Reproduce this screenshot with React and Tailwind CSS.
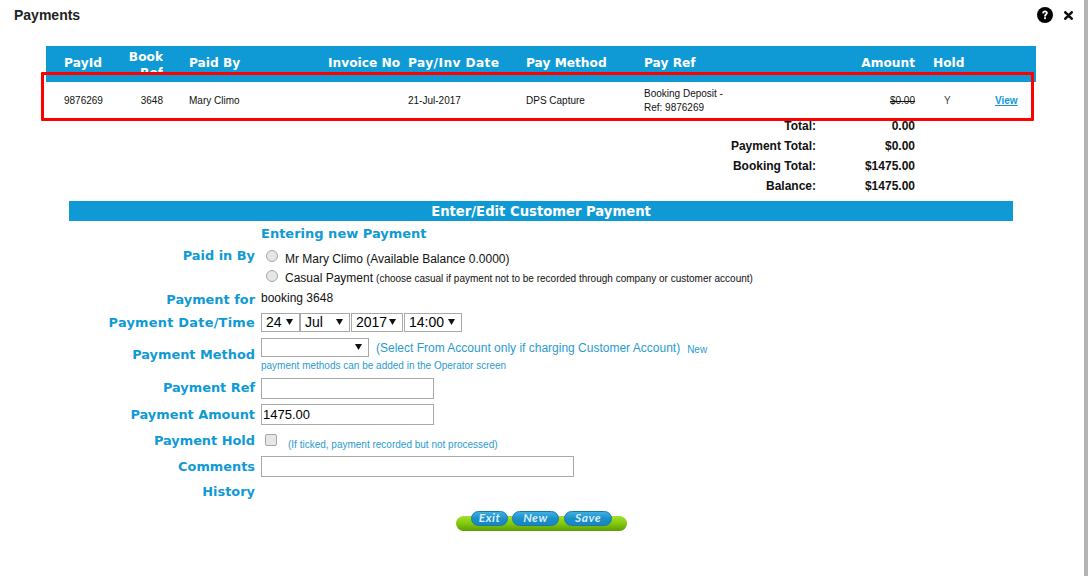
import React from "react";

const V = "font-['DejaVu_Sans',Verdana,sans-serif]";
const A = "font-['Liberation_Sans',Arial,sans-serif]";
const blue = "text-[#0f9ad6]";

function Label({ children, className = "" }) {
  return (
    <div className={`w-[187px] shrink-0 pr-[6px] text-right text-[12.9px] leading-[16px] font-bold ${blue} ${V} ${className}`}>
      {children}
    </div>
  );
}

function Sel({ w, v }) {
  return (
    <div className={`relative h-[19px] border border-[#a9a9a9] bg-white text-[14px] leading-[17px] text-black pl-[4px] ${w}`}>
      {v}
      <svg className="absolute right-[6px] top-[5px]" width="7" height="6" viewBox="0 0 7 6">
        <path d="M0 0H7L3.5 6Z" fill="#111" />
      </svg>
    </div>
  );
}

function Btn({ children, w }) {
  return (
    <div className={`flex h-[15px] items-center justify-center rounded-full border border-[#1479ad] bg-gradient-to-b from-[#3fb0e4] via-[#1c8fca] to-[#1a86c0] pb-[1px] font-['Lato',sans-serif] text-[12px] italic font-bold tracking-[0.5px] text-[#d7effa] ${w}`}>
      {children}
    </div>
  );
}

export default function App() {
  const th = `text-[12.2px] leading-[16px] font-bold text-white ${V}`;
  const td = "pt-[1px] text-[10px] leading-[14px] text-[#111]";
  const totals = [
    ["Total:", "0.00"],
    ["Payment Total:", "$0.00"],
    ["Booking Total:", "$1475.00"],
    ["Balance:", "$1475.00"],
  ];
  return (
    <div className={`relative h-[576px] w-[1088px] overflow-hidden bg-white ${A}`}>
      <div className="absolute right-0 top-0 h-full w-[4px] bg-[#b4b4b4]" />
      <div className="flex h-[46px] items-start justify-between pl-[14px] pr-[15px] pt-[7px]">
        <div className="text-[14px] leading-[17px] font-bold text-[#222]">Payments</div>
        <div className="flex items-center gap-[11px]">
          <svg width="16" height="16" viewBox="0 0 16 16">
            <circle cx="8" cy="8" r="8" fill="#000" />
            <path d="M5.2 6.2C5.2 4.6 6.4 3.6 8 3.6S10.8 4.6 10.8 6C10.8 7.8 8.9 7.8 8.9 9.4H7.1C7.1 7.2 8.9 7.2 8.9 6.1C8.9 5.6 8.5 5.3 8 5.3S7 5.7 7 6.4Z" fill="#fff" />
            <rect x="7.1" y="10.2" width="1.8" height="1.9" fill="#fff" />
          </svg>
          <svg width="9" height="9" viewBox="0 0 9 9">
            <path d="M1.3 1.3L7.7 7.7M7.7 1.3L1.3 7.7" stroke="#111" strokeWidth="2.6" strokeLinecap="round" />
          </svg>
        </div>
      </div>

      <div className="ml-[46px] w-[990px]">
        <div className="grid h-[36px] grid-cols-[49px_50px_165px_80px_118px_118px_219px_52px_1fr] bg-[#0f9ad6] pl-[18px]">
          <div className={`${th} pt-[9px] tracking-[0.1px]`}>PayId</div>
          <div className={`${th} h-[29px] overflow-hidden pt-[3px] text-right leading-[14px]`}>Book Ref</div>
          <div className={`${th} pl-[26px] pt-[9px] whitespace-nowrap`}>Paid By</div>
          <div className={`${th} pt-[9px] whitespace-nowrap`}>Invoice No</div>
          <div className={`${th} pt-[9px] whitespace-nowrap tracking-[0.4px]`}>Pay/Inv Date</div>
          <div className={`${th} pt-[9px] whitespace-nowrap`}>Pay Method</div>
          <div className={`${th} pt-[9px] whitespace-nowrap`}>Pay Ref</div>
          <div className={`${th} -ml-[48px] pt-[9px] text-right`}>Amount</div>
          <div className={`${th} pl-[18px] pt-[9px]`}>Hold</div>
        </div>
        <div className="grid h-[36px] grid-cols-[49px_50px_165px_80px_118px_118px_219px_52px_80px_1fr] items-center pl-[18px]">
          <div className={td}>9876269</div>
          <div className={`${td} text-right`}>3648</div>
          <div className={`${td} pl-[26px] whitespace-nowrap`}>Mary Climo</div>
          <div />
          <div className={td}>21-Jul-2017</div>
          <div className={td}>DPS Capture</div>
          <div className={td}>Booking Deposit -<br />Ref: 9876269</div>
          <div className={`${td} -ml-[48px] text-right line-through`}>$0.00</div>
          <div className={`${td} pl-[29px] text-[#444]`}>Y</div>
          <div className={`pt-[1px] text-[10px] font-bold underline ${blue}`}>View</div>
        </div>
      </div>

      <div className="-mt-[2px] flex flex-col text-[12px] leading-[20px] font-bold text-[#111]">
        {totals.map(([k, v]) => (
          <div key={k} className="flex h-[20px]">
            <div className="w-[816px] text-right">{k}</div>
            <div className="w-[99px] text-right">{v}</div>
          </div>
        ))}
      </div>

      <div className={`ml-[69px] mt-[5px] h-[20px] w-[944px] bg-[#0f9ad6] pt-[1px] text-center text-[13.2px] leading-[19px] font-bold text-white ${V}`}>
        Enter/Edit Customer Payment
      </div>

      <div className={`ml-[261px] mt-[5px] h-[16px] text-[13px] leading-[16px] font-bold ${blue} ${V}`}>Entering new Payment</div>

      <div className="ml-[74px] mt-[4px] flex flex-col">
        <div className="flex h-[41px]">
          <Label className="pt-[2px]">Paid in By</Label>
          <div className="flex flex-col text-[12px] leading-[20px] text-[#111]">
            <div className="flex h-[20px] items-center pl-[5px]">
              <div className="mr-[7px] h-[12px] w-[12px] rounded-full border border-[#a5a5a5] bg-[#e6e6e6]" />
              <span className="pt-[5px]">Mr Mary Climo (Available Balance 0.0000)</span>
            </div>
            <div className="flex h-[20px] items-center pl-[5px]">
              <div className="mr-[7px] h-[12px] w-[12px] rounded-full border border-[#a5a5a5] bg-[#e6e6e6]" />
              <span className="pt-[4px]">Casual Payment</span>
              <span className="ml-[3px] pt-[5px] text-[10px]">(choose casual if payment not to be recorded through company or customer account)</span>
            </div>
          </div>
        </div>
        <div className="flex h-[25px]">
          <Label className="pt-[5px]">Payment for</Label>
          <div className="pt-[3px] text-[12px] leading-[16px] text-[#111]">booking 3648</div>
        </div>
        <div className="flex h-[25px] items-start">
          <Label className="pt-[3px] tracking-[0.25px]">Payment Date/Time</Label>
          <div className="flex pt-[1px]">
            <Sel w="w-[39px]" v="24" />
            <Sel w="w-[50px]" v="Jul" />
            <Sel w="w-[52px] ml-[1px]" v="2017" />
            <Sel w="w-[58px] ml-[1px]" v="14:00" />
          </div>
        </div>
        <div className="mt-[1px] flex h-[38px]">
          <Label className="pt-[9px]">Payment Method</Label>
          <div className="flex flex-col">
            <div className="flex items-center">
              <Sel w="w-[108px]" v="" />
              <span className="ml-[7px] pt-[2px] text-[12px] leading-[17px] text-[#2a9bd0]">(Select From Account only if charging Customer Account)</span>
              <span className="ml-[7px] pt-[3px] text-[10px] text-[#2a9bd0]">New</span>
            </div>
            <div className="mt-[2px] text-[10px] leading-[14px] text-[#2a9bd0]">payment methods can be added in the Operator screen</div>
          </div>
        </div>
        <div className="flex h-[28px] items-start">
          <Label className="pt-[4px]">Payment Ref</Label>
          <div className="mt-[2px] h-[21px] w-[173px] border border-[#a9a9a9] bg-white" />
        </div>
        <div className="flex h-[26px] items-start">
          <Label className="pt-[3px]">Payment Amount</Label>
          <div className="h-[21px] w-[173px] border border-[#a9a9a9] bg-white pl-[1px] pt-[1px] text-[13px] leading-[18px] text-black">1475.00</div>
        </div>
        <div className="flex h-[26px] items-start">
          <Label className="pt-[3px]">Payment Hold</Label>
          <div className="ml-[4px] mt-[4px] h-[12px] w-[12px] rounded-[2px] border border-[#a5a5a5] bg-[#e6e6e6]" />
          <div className="ml-[11px] pt-[8px] text-[10px] leading-[14px] text-[#2a9bd0]">(If ticked, payment recorded but not processed)</div>
        </div>
        <div className="flex h-[25px] items-start">
          <Label className="pt-[3px]">Comments</Label>
          <div className="h-[21px] w-[313px] border border-[#a9a9a9] bg-white" />
        </div>
        <div className="flex h-[20px]">
          <Label className="pt-[3px]">History</Label>
        </div>
      </div>

      <div className="ml-[456px] mt-[15px] flex h-[15px] w-[171px] items-start gap-[4px] rounded-full bg-gradient-to-b from-[#a6e02a] via-[#82c90f] to-[#5f9c05] pl-[15px]">
        <Btn w="w-[37px] -mt-[5px]">Exit</Btn>
        <Btn w="w-[47px] -mt-[5px]">New</Btn>
        <Btn w="w-[48px] -mt-[5px] ml-[1px]">Save</Btn>
      </div>

      <div className="absolute left-[41px] top-[72px] h-[49px] w-[993px] rounded-[1px] border-[3px] border-[#ff0000]" />
    </div>
  );
}
